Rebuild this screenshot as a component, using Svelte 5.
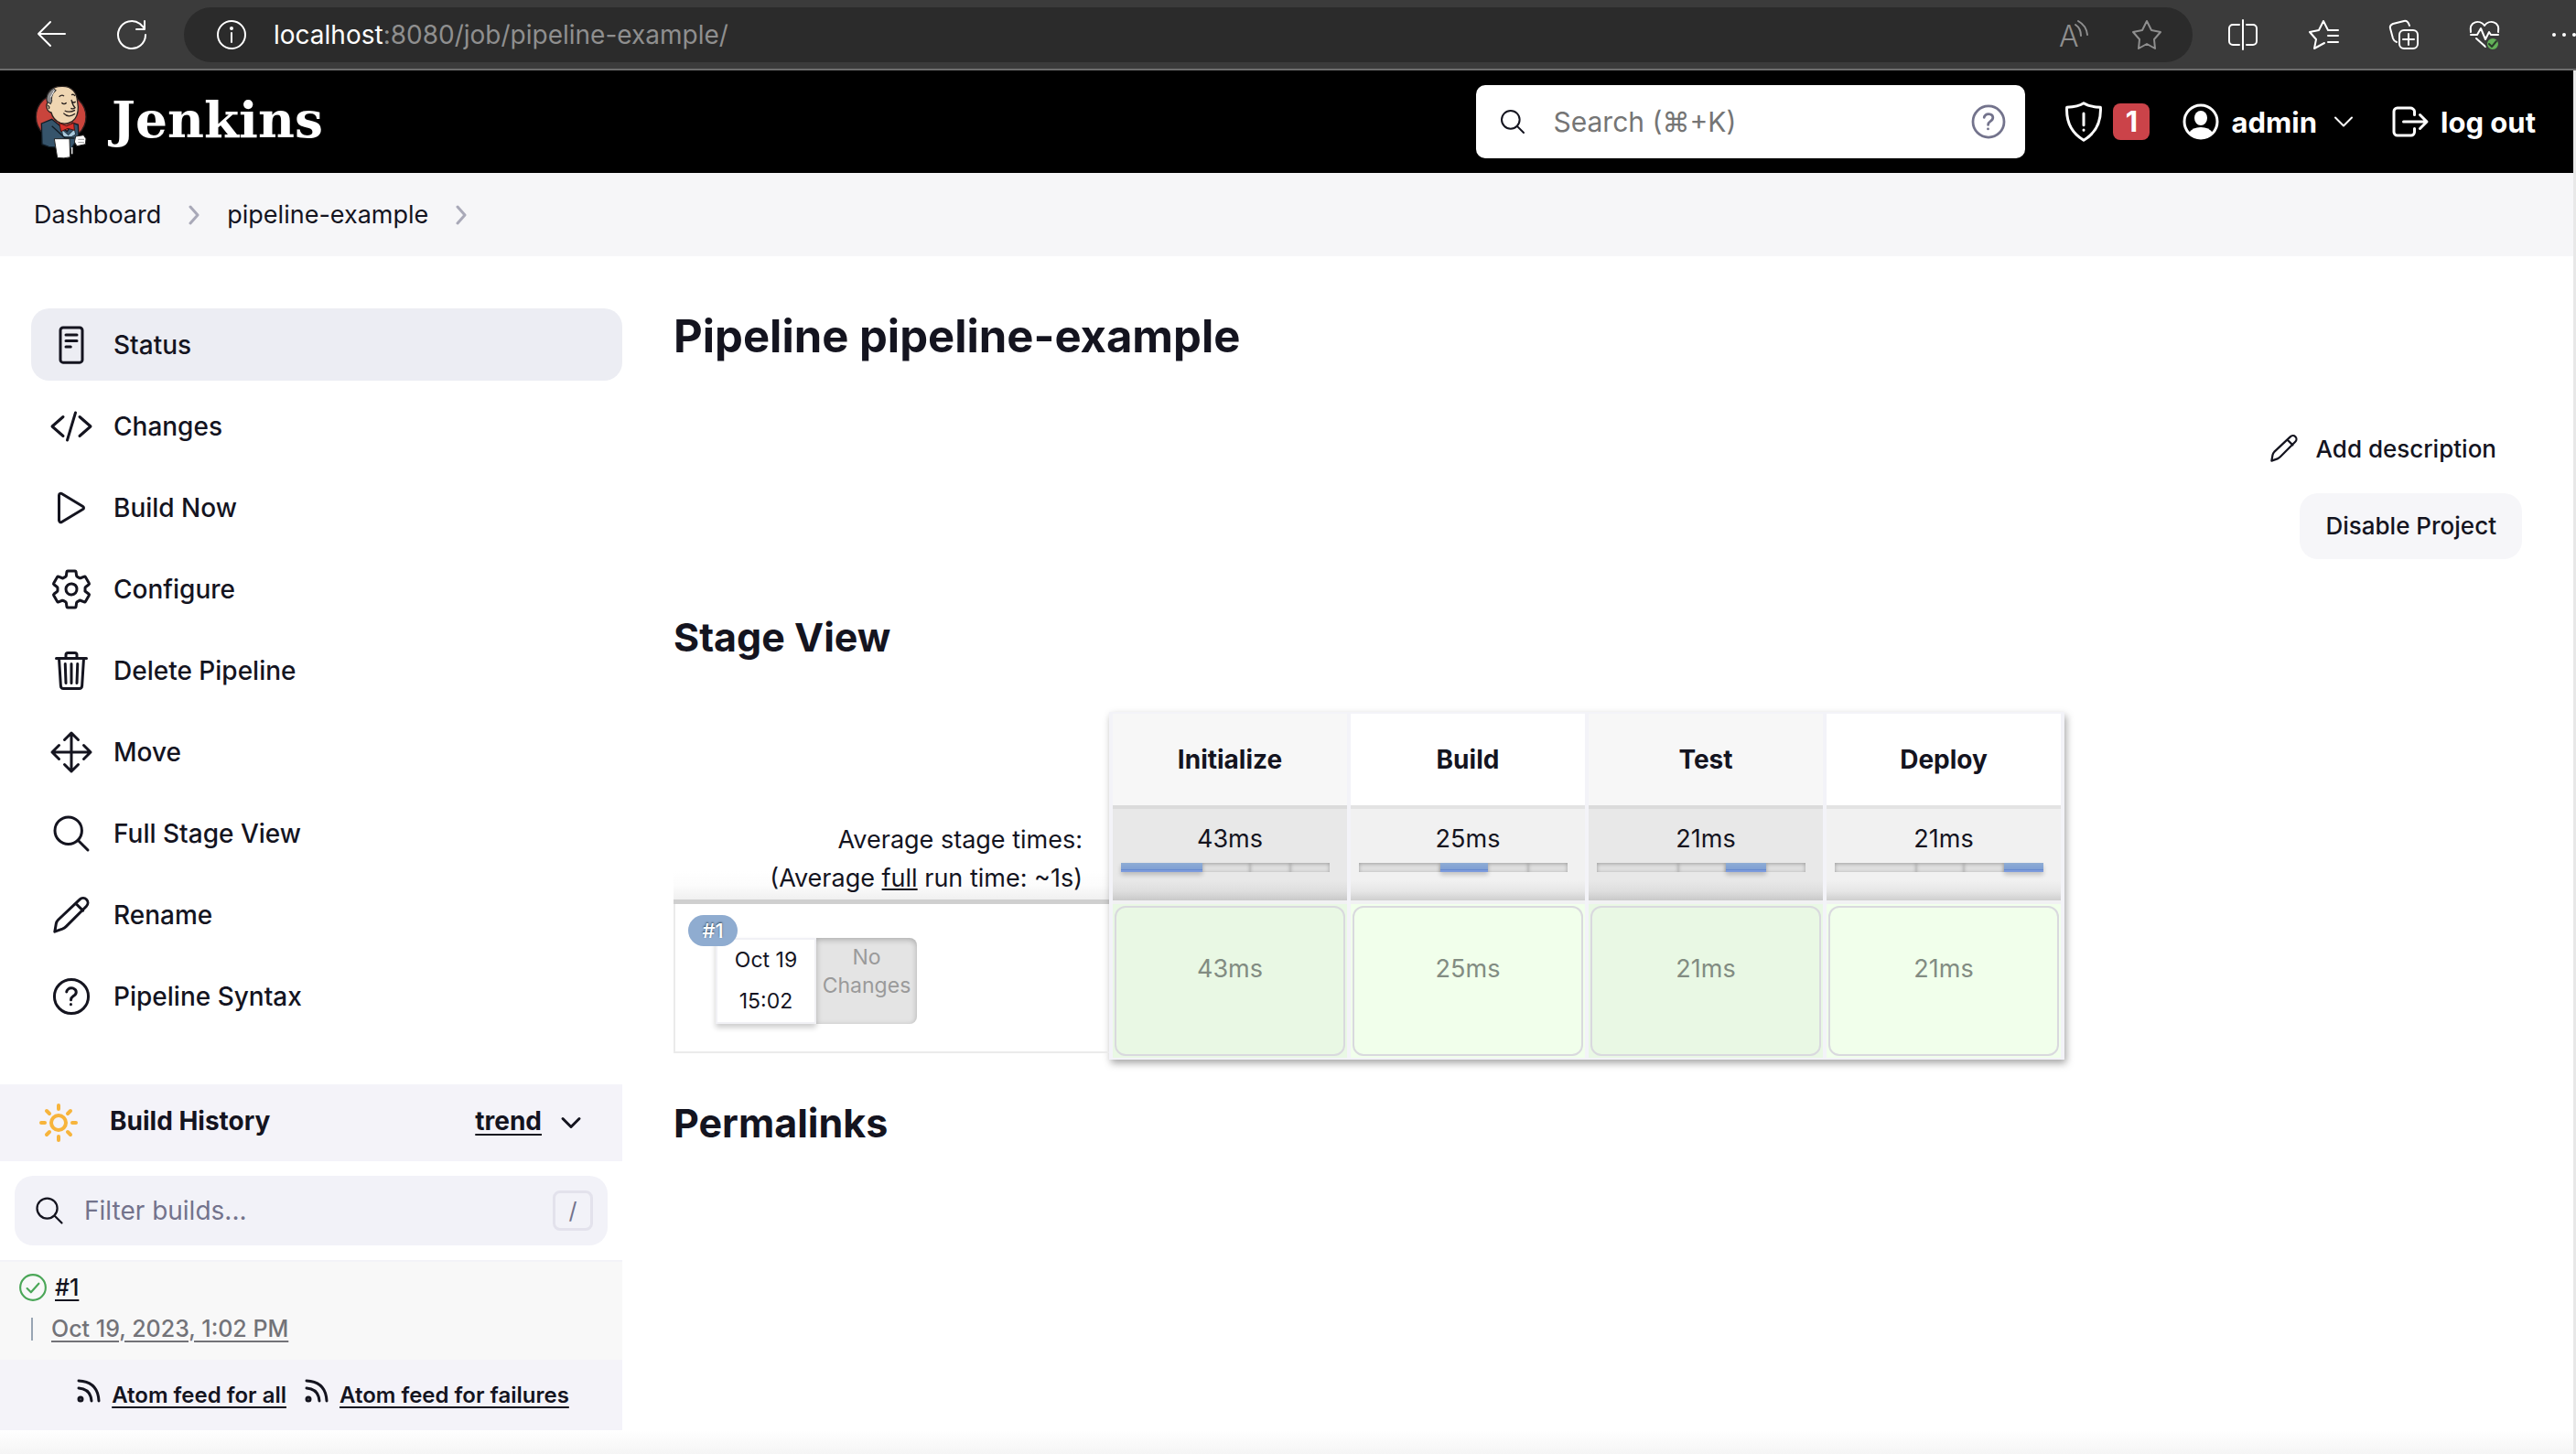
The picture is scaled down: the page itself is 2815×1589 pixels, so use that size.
<script>
  const stages = [
    { name: 'Initialize', time: '43ms', share: 39 },
    { name: 'Build', time: '25ms', share: 23 },
    { name: 'Test', time: '21ms', share: 19 },
    { name: 'Deploy', time: '21ms', share: 19 }
  ];

  const icons = {
    status: 'M160 52h192a32 32 0 0132 32v344a32 32 0 01-32 32H160a32 32 0 01-32-32V84a32 32 0 0132-32zM192 138h128M192 208h128M192 278h56',
    code: 'M160 368L32 256l128-112M352 368l128-112-128-112M304 96l-96 320',
    play: 'M112 111v290c0 17.440 17 28.520 31 20.160l247.900-148.370c12.120-7.250 12.120-26.330 0-33.580L143 90.840c-14-8.360-31 2.720-31 20.160z',
    gear: 'M262.290 192.310a64 64 0 1057.400 57.400 64.130 64.130 0 00-57.400-57.400zM416.390 256a154.340 154.340 0 01-1.530 20.790l45.210 35.460a10.810 10.810 0 012.450 13.750l-42.770 74a10.810 10.810 0 01-13.140 4.590l-44.900-18.080a16.110 16.110 0 00-15.170 1.750A164.480 164.480 0 01325 400.800a15.940 15.940 0 00-8.820 12.140l-6.730 47.890a11.080 11.080 0 01-10.680 9.170h-85.540a11.110 11.110 0 01-10.690-8.870l-6.720-47.820a16.070 16.070 0 00-9-12.220 155.300 155.300 0 01-21.460-12.570 16 16 0 00-15.110-1.710l-44.890 18.070a10.810 10.810 0 01-13.140-4.580l-42.770-74a10.800 10.800 0 012.450-13.750l38.210-30a16.050 16.050 0 006-14.080c-.360-4.170-.580-8.330-.580-12.500s.210-8.270.580-12.350a16 16 0 00-6.070-13.940l-38.190-30A10.810 10.810 0 0149.480 186l42.770-74a10.810 10.810 0 0113.140-4.590l44.900 18.080a16.110 16.110 0 0015.170-1.750A164.480 164.480 0 01187 111.200a15.940 15.940 0 008.820-12.140l6.730-47.890A11.080 11.080 0 01213.230 42h85.540a11.110 11.110 0 0110.690 8.870l6.720 47.820a16.070 16.070 0 009 12.220 155.300 155.300 0 0121.460 12.570 16 16 0 0015.110 1.710l44.890-18.070a10.810 10.810 0 0113.140 4.580l42.770 74a10.800 10.800 0 01-2.450 13.750l-38.210 30a16.050 16.050 0 00-6.050 14.080c.330 4.140.550 8.300.550 12.470z',
    trash: 'M112 112l20 320c.950 18.490 14.400 32 32 32h184c17.670 0 30.870-13.510 32-32l20-320M80 112h352M192 112V72a24 24 0 0124-24h80a24 24 0 0124 24v40M256 176v224M184 176l8 224M328 176l-8 224',
    move: 'M176 112l80-80 80 80M256 32v448M176 400l80 80 80-80M400 176l80 80-80 80M112 176l-80 80 80 80M32 256h448',
    search: 'M221 64a157 157 0 10157 157A157 157 0 00221 64zM338 338l110 110',
    pencil: 'M62 450l16-92c4-20 10-32 24-46L352 76c22-22 58-24 80-2s20 58-2 80L196 388c-14 14-26 22-44 30zM306 120l84 84',
    help: 'M256 58a198 198 0 10198 198A198 198 0 00256 58zM200 202s1-17 20-32c11-9 24-12 36-12 11 0 21 2 27 5 10 4 29 16 29 41 0 26-17 38-36 50s-25 27-25 42M250 347v2',
    logout: 'M304 336v40a40 40 0 01-40 40H104a40 40 0 01-40-40V136a40 40 0 0140-40h152c22 0 48 18 48 40v40M368 336l80-80-80-80M176 256h256',
    down: 'M112 184l144 144 144-144',
    shield: 'M256 40c50 34 110 44 196 48 10 180-60 304-196 384C120 392 50 268 60 88c86-4 146-14 196-48zM256 160v136M256 352v2'
  };

  const menu = [
    ['status', 'Status'],
    ['code', 'Changes'],
    ['play', 'Build Now'],
    ['gear', 'Configure'],
    ['trash', 'Delete Pipeline'],
    ['move', 'Move'],
    ['search', 'Full Stage View'],
    ['pencil', 'Rename'],
    ['help', 'Pipeline Syntax']
  ];

  const feeds = ['Atom feed for all', 'Atom feed for failures'];
</script>

{#snippet icon(name, cls)}
  <svg class="icon {cls}" viewBox="0 0 512 512" aria-hidden="true"><path d={icons[name]} /></svg>
{/snippet}

<div class="chrome">
  <button class="tool" aria-label="Back">
    <svg viewBox="0 0 32 32"><path d="M31 15H2M15 2L2 15l13 13" /></svg>
  </button>
  <button class="tool reload" aria-label="Reload">
    <svg viewBox="0 0 32 32"><path d="M31 16A15 15 0 1 1 25 4l5 5M30 1v9h-9" /></svg>
  </button>
  <div class="address">
    <svg class="tool-svg" viewBox="0 0 32 32"><circle cx="16" cy="16" r="15" /><path d="M16 14v10" /><circle class="dot" cx="16" cy="9" r="2" /></svg>
    <span class="url"><b>localhost</b>:8080/job/pipeline-example/</span>
    <button class="tool dim" aria-label="Read aloud">
      <svg viewBox="0 0 32 32"><text x="0" y="29">A</text><path d="M18 5q6 4 6 12M21 1q9 5 10 15" /></svg>
    </button>
    <button class="tool dim" aria-label="Add to favourites">
      <svg viewBox="0 0 32 32"><path d="M16 1l5 10 10 2-7 8 1 10-9-5-9 5 1-10-7-8 10-2z" /></svg>
    </button>
  </div>
  <div class="tools">
    <button class="tool" aria-label="Split screen">
      <svg viewBox="0 0 32 32"><path d="M16 0v32M12 5H5a4 4 0 0 0-4 4v14a4 4 0 0 0 4 4h7M20 5h7a4 4 0 0 1 4 4v14a4 4 0 0 1-4 4h-7" /></svg>
    </button>
    <button class="tool" aria-label="Favourites">
      <svg viewBox="0 0 32 32"><path d="M32 11H21L16 1l-5 10-10 2 7 8-2 10 11-6M21 17h11M21 24h11" /></svg>
    </button>
    <button class="tool" aria-label="Collections">
      <svg viewBox="0 0 32 32"><rect x="11" y="11" width="20" height="20" rx="5" /><path d="M21 15v12M15 21h12M8 24q-3-1-4-4L1 9q-1-3 3-5l12-3q4-1 6 5" /></svg>
    </button>
    <button class="tool" aria-label="Browser essentials">
      <svg viewBox="0 0 32 32"><path d="M1 13C-1 1 11-1 16 6 21-1 33 1 31 13M1 16h7l4-7 5 12 4-8 2 3h8M7 20l10 9" /><circle class="ok" cx="25" cy="26" r="7" /><path class="tick" d="M21 26l3 3 5-6" /></svg>
    </button>
    <button class="tool more" aria-label="More">
      <svg viewBox="0 0 28 32"><circle class="dot" cx="4" cy="16" r="2" /><circle class="dot" cx="15" cy="16" r="2" /><circle class="dot" cx="26" cy="16" r="2" /></svg>
    </button>
  </div>
</div>

<div class="page">
  <header>
    <a class="brand" href="#home">
      <svg class="butler" viewBox="24 36 174 243" aria-hidden="true">
        <ellipse cx="110" cy="140" rx="82" ry="78" fill="#c9443c" stroke="#2a1d1d" stroke-width="4" />
        <path d="M46 162l34-14 50 40 18-28 18 6 2 40-24 38-74-6-22-8z" fill="#36546b" stroke="#111c25" stroke-width="4" />
        <path d="M66 92C58 62 78 40 112 40c34-2 50 22 52 50 4 22 4 40-8 56-10 14-30 20-48 14-16-6-26-18-30-34-16-4-18-24-12-34z" fill="#efd6b2" stroke="#2b2320" stroke-width="4" />
        <path d="M64 90c-4-16 4-32 22-44l8 8c-12 8-16 20-14 34l-4 10z" fill="#8d8d8f" stroke="#222" stroke-width="3" />
        <path d="M88 54l-12 22" stroke="#eee" stroke-width="3" />
        <path d="M104 74q8-8 16-2M144 68q8-4 12 4M112 94q8 8 16 0M146 90q6 6 12 0M144 84q4 18 12 26-6 6-14 2M122 120q16 8 34-2M118 128q16 18 38 2M66 102q8 4 4 12" fill="none" stroke="#2b2320" stroke-width="4" />
        <path d="M112 180l22 20 20-20 4 18-14 8H116z" fill="#a9c9dc" stroke="#22303c" stroke-width="3" />
        <path d="M104 160l24 10 24-10 2 24-22-6-22 10z" fill="#d8322b" stroke="#4a1512" stroke-width="3" />
        <path d="M80 170l44 40h30" fill="none" stroke="#111c25" stroke-width="4" />
        <path d="M88 212h50l2 60q-20 6-42 2z" fill="#fff" stroke="#222" stroke-width="3" />
        <path d="M158 204l26-4 8 12-2 18-28 6-8-14z" fill="#fff" stroke="#222" stroke-width="3" />
        <path d="M166 214h20M166 224h20" stroke="#999" stroke-width="3" />
        <path d="M146 240v22" stroke="#ddd" stroke-width="5" />
      </svg>
      <span>Jenkins</span>
    </a>
    <label class="search">
      {@render icon('search', 'i32')}
      <input type="text" aria-label="Search" placeholder="Search (⌘+K)" />
      {@render icon('help', 'i44 muted')}
    </label>
    <a class="alerts" href="#security" aria-label="Security warnings">
      {@render icon('shield', 'i48')}
      <span class="count">1</span>
    </a>
    <a class="user" href="#admin">
      <svg class="i40" viewBox="0 0 40 40" aria-hidden="true">
        <circle cx="20" cy="20" r="18" fill="none" stroke="#fff" stroke-width="3" />
        <ellipse cx="20" cy="16" rx="7" ry="8" fill="#fff" />
        <path d="M7 32q4-6 13-6t13 6q-5 7-13 7T7 32z" fill="#fff" />
      </svg>
      <span>admin</span>
      {@render icon('down', 'i32')}
    </a>
    <a class="logout" href="#logout">
      {@render icon('logout', 'i48')}
      <span>log out</span>
    </a>
  </header>

  <nav class="crumbs" aria-label="Breadcrumb">
    <a href="#dashboard">Dashboard</a>
    <svg viewBox="0 0 12 22" aria-hidden="true"><path d="M2 2l8 9-8 9" /></svg>
    <a href="#job">pipeline-example</a>
    <svg viewBox="0 0 12 22" aria-hidden="true"><path d="M2 2l8 9-8 9" /></svg>
  </nav>

  <div class="body">
    <aside>
      <nav class="menu" aria-label="Job">
        {#each menu as [name, label], i}
          <a href="#{name}" class:active={i === 0}>
            {@render icon(name, 'i48')}
            <span>{label}</span>
          </a>
        {/each}
      </nav>

      <section class="history">
        <div class="history-head">
          <svg class="sun" viewBox="0 0 42 42" aria-hidden="true">
            <circle cx="21" cy="21" r="8" />
            <path d="M21 2v4M21 36v4M2 21h4M36 21h4M8 8l3 3M31 31l3 3M8 34l3-3M31 11l3-3" />
          </svg>
          <h2>Build History</h2>
          <a href="#trend">trend</a>
          {@render icon('down', 'i32 heavy')}
        </div>
        <label class="filter">
          {@render icon('search', 'i36')}
          <input type="text" aria-label="Filter builds" placeholder="Filter builds..." />
          <kbd>/</kbd>
        </label>
        <div class="build">
          <div class="build-name">
            <svg viewBox="0 0 30 30" aria-hidden="true"><circle cx="15" cy="15" r="13" /><path d="M9 16l4 4 8-9" /></svg>
            <a href="#build1">#1</a>
          </div>
          <div class="build-time"><a href="#build1">Oct 19, 2023, 1:02 PM</a></div>
        </div>
        <div class="feeds">
          {#each feeds as feed}
            <a href="#feed">
              <svg viewBox="0 0 26 26" aria-hidden="true"><circle cx="4" cy="22" r="2" /><path d="M2 10q13 1 14 14M2 2q21 1 22 22" /></svg>
              <span>{feed}</span>
            </a>
          {/each}
        </div>
      </section>
    </aside>

    <main>
      <h1>Pipeline pipeline-example</h1>
      <div class="actions">
        <a class="describe" href="#describe">{@render icon('pencil', 'i36')}<span>Add description</span></a>
        <button class="disable">Disable Project</button>
      </div>

      <h2>Stage View</h2>
      <div class="stage-view">
        <div class="runs">
          <div class="average">
            <div>Average stage times:</div>
            <div>(Average <u>full</u> run time: ~1s)</div>
          </div>
          <div class="run">
            <span class="run-badge">#1</span>
            <div class="run-date"><span>Oct 19</span><span>15:02</span></div>
            <div class="run-changes">No<br />Changes</div>
          </div>
        </div>
        <table>
          <thead>
            <tr>{#each stages as s}<th scope="col">{s.name}</th>{/each}</tr>
          </thead>
          <tbody>
            <tr class="totals">
              {#each stages as s, i}
                <td>
                  <div>{s.time}</div>
                  <div class="bar">
                    {#each stages as part, j}<span class:on={i === j} style:flex-grow={part.share}></span>{/each}
                  </div>
                </td>
              {/each}
            </tr>
            <tr class="results">
              {#each stages as s}<td><div>{s.time}</div></td>{/each}
            </tr>
          </tbody>
        </table>
      </div>

      <h2>Permalinks</h2>
    </main>
  </div>
  <div class="fade"></div>
</div>

<style>
  :global(body) {
    margin: 0;
    background: #fff;
    overflow: hidden;
  }
  :global(#app) {
    font-family: Inter, 'Liberation Sans', sans-serif;
    font-size: 28px;
    color: #14141f;
  }
  a {
    color: inherit;
    text-decoration: none;
  }
  button {
    font: inherit;
    color: inherit;
    border: 0;
    padding: 0;
    background: none;
  }
  input {
    font: inherit;
    color: inherit;
    border: 0;
    padding: 0;
    background: none;
    flex: 1;
    min-width: 0;
    outline: 0;
  }
  svg {
    flex: none;
    display: block;
  }
  .icon {
    fill: none;
    stroke: currentColor;
    stroke-width: 32;
    stroke-linecap: round;
    stroke-linejoin: round;
  }
  .heavy { stroke-width: 48; }
  .muted { color: #73738c; }
  .i32 { width: 32px; height: 32px; }
  .i36 { width: 36px; height: 36px; }
  .i40 { width: 40px; height: 40px; }
  .i44 { width: 44px; height: 44px; }
  .i48 { width: 48px; height: 48px; }

  /* browser toolbar */
  .chrome {
    display: flex;
    align-items: center;
    height: 75px;
    padding-left: 40px;
    background: #3b3b3b;
    border-bottom: 2px solid #6c6c6c;
    overflow: hidden;
  }
  .tool svg,
  .tool-svg {
    width: 32px;
    height: 32px;
    fill: none;
    stroke: #fff;
    stroke-width: 2;
    stroke-linecap: round;
    stroke-linejoin: round;
    overflow: visible;
  }
  .dim svg { stroke: #8f8f8f; }
  .dim text {
    font-size: 32px;
    font-weight: 300;
    fill: #8f8f8f;
    stroke: none;
  }
  .tool .dot,
  .tool-svg .dot { fill: #fff; stroke: none; }
  .tool .ok { fill: #62b058; stroke: #3b3b3b; }
  .tool .tick { stroke: #2b3b2b; }
  .reload { margin: 0 41px 0 56px; }
  .address {
    flex: 1;
    display: flex;
    align-items: center;
    gap: 48px;
    height: 60px;
    padding: 0 34px 0 36px;
    margin-right: 39px;
    border-radius: 30px;
    background: #2b2b2b;
  }
  .url {
    flex: 1;
    margin-left: -18px;
    color: #8f8f8f;
  }
  .url b { font-weight: 400; color: #fff; }
  .tools { display: flex; gap: 56px; }
  .tool.more svg { width: 28px; }

  .page { border-right: 3px solid #e8e8e8; }

  header {
    display: flex;
    align-items: center;
    height: 112px;
    padding: 0 41px 0 38px;
    background: #000;
    color: #fff;
    font-size: 31px;
    font-weight: 700;
  }
  .brand {
    display: flex;
    align-items: center;
    gap: 26px;
    margin-right: auto;
    font-family: 'DejaVu Serif', serif;
    font-size: 55px;
    font-weight: 700;
    line-height: 70px;
  }
  .brand span { padding-bottom: 4px; }
  .butler { width: 58px; height: 81px; }
  .search {
    display: flex;
    align-items: center;
    width: 600px;
    height: 80px;
    box-sizing: border-box;
    padding: 0 18px 0 24px;
    border-radius: 10px;
    background: #fff;
    color: #14141f;
    font-size: 30px;
    font-weight: 400;
  }
  .search input { margin-left: 28px; }
  .search input::placeholder { color: #757575; opacity: 1; }
  .alerts,
  .user,
  .logout { display: flex; align-items: center; }
  .alerts { margin-left: 40px; gap: 8px; }
  .count {
    width: 40px;
    line-height: 40px;
    text-align: center;
    border-radius: 8px;
    background: #cb4349;
  }
  .user { margin-left: 36px; gap: 13px; }
  .logout { margin-left: 33px; gap: 9px; }

  .crumbs {
    display: flex;
    align-items: center;
    gap: 30px;
    height: 91px;
    padding-left: 37px;
    background: #f6f6f8;
    font-size: 27px;
  }
  .crumbs svg {
    width: 12px;
    height: 22px;
    fill: none;
    stroke: #a9a9b8;
    stroke-width: 3;
    stroke-linecap: round;
    stroke-linejoin: round;
  }

  .body { display: flex; }
  aside {
    width: 680px;
    flex: none;
    padding-top: 57px;
  }
  .menu {
    display: flex;
    flex-direction: column;
    gap: 10px;
    padding-left: 34px;
    margin-bottom: 57px;
    font-weight: 500;
  }
  .menu a {
    display: flex;
    align-items: center;
    gap: 22px;
    height: 79px;
    padding-left: 20px;
    border-radius: 20px;
  }
  .menu .active { background: #ecedf3; }

  .history-head {
    display: flex;
    align-items: center;
    height: 84px;
    padding: 0 40px 0 43px;
    background: #f4f3f9;
    font-weight: 700;
  }
  .history-head h2 {
    flex: 1;
    margin: 0 0 4px 35px;
    font-size: 28px;
    font-weight: 700;
  }
  .history-head a {
    margin: 0 16px 4px 0;
    text-decoration: underline;
    text-underline-offset: 4px;
    text-decoration-thickness: 2px;
  }
  .sun {
    width: 42px;
    height: 42px;
    fill: none;
    stroke: #f7b43c;
    stroke-width: 4;
    stroke-linecap: round;
  }
  .filter {
    display: flex;
    align-items: center;
    height: 76px;
    margin: 16px;
    padding: 0 16px 0 20px;
    border-radius: 20px;
    background: #f2f2f8;
  }
  .filter input { margin-left: 20px; }
  .filter input::placeholder { color: #73738c; opacity: 1; }
  kbd {
    width: 38px;
    line-height: 38px;
    text-align: center;
    border: 3px solid #e3e2ec;
    border-radius: 8px;
    font-family: inherit;
    font-size: 25px;
    color: #73738c;
  }
  .build {
    border-top: 2px solid #f3f3f8;
    padding: 12px 20px 17px;
    background: #f8f8f8;
    font-size: 25px;
    font-weight: 500;
  }
  .build a,
  .feeds span {
    text-decoration: underline;
    text-underline-offset: 4px;
    text-decoration-thickness: 2px;
  }
  .build-name {
    display: flex;
    align-items: center;
    gap: 8px;
    height: 32px;
  }
  .build-name svg {
    width: 32px;
    height: 32px;
    fill: none;
    stroke: #4aa657;
    stroke-width: 2;
    stroke-linecap: round;
    stroke-linejoin: round;
  }
  .build-time {
    margin: 17px 0 4px 14px;
    padding-left: 20px;
    border-left: 2px solid #98a5b3;
    line-height: 25px;
    color: #737378;
  }
  .feeds {
    display: flex;
    justify-content: center;
    gap: 20px;
    padding: 0 0 0 26px;
    line-height: 77px;
    background: #f4f3f9;
    font-size: 24px;
    font-weight: 600;
  }
  .feeds a { display: flex; align-items: center; gap: 12px; }
  .feeds svg {
    width: 26px;
    height: 26px;
    margin-bottom: 10px;
    fill: none;
    stroke: #14141f;
    stroke-width: 3;
    stroke-linecap: round;
  }

  main {
    flex: 1;
    padding: 58px 56px 0 56px;
  }
  h1 {
    margin: 0;
    font-size: 49px;
    line-height: 60px;
    font-weight: 700;
  }
  main h2 {
    margin: 0;
    font-size: 43px;
    line-height: 56px;
    font-weight: 700;
  }
  .actions {
    display: flex;
    flex-direction: column;
    align-items: flex-end;
    gap: 31px;
    margin: 74px 0 57px;
    font-size: 26px;
    font-weight: 500;
  }
  .describe {
    display: flex;
    align-items: center;
    gap: 17px;
    padding-right: 28px;
  }
  .disable {
    padding: 0 28px;
    line-height: 72px;
    border-radius: 20px;
    background: #f6f6f9;
  }
  .stage-view {
    display: flex;
    align-items: flex-end;
    margin: 54px 0 41px;
  }
  .runs { width: 476px; padding-bottom: 7px; }
  .average {
    padding: 18px 29px 2px 0;
    border-bottom: 5px solid #cfcfcf;
    background: linear-gradient(#fff 70%, #fcfcfc 85%, #f0f0f0);
    font-size: 27px;
    text-align: right;
    line-height: 42px;
  }
  .run {
    position: relative;
    display: flex;
    height: 94px;
    padding: 37px 0 30px 44px;
    border: 2px solid #ebebeb;
    border-top: 0;
    border-right: 0;
    font-size: 23px;
  }
  .run-badge {
    position: absolute;
    left: 14px;
    top: 12px;
    width: 54px;
    line-height: 34px;
    text-align: center;
    border-radius: 17px;
    background: #8facd0;
    color: #fff;
    font-size: 22px;
    font-weight: 500;
    text-shadow: 0 -1px 2px #345;
  }
  .run-date {
    display: flex;
    flex-direction: column;
    width: 106px;
    border: 2px solid #f1f1f5;
    line-height: 45px;
    text-align: center;
    box-shadow: 0 4px 6px rgba(0, 0, 0, 0.2);
  }
  .run-changes {
    width: 110px;
    padding-top: 6px;
    border-radius: 0 8px 8px 0;
    background: #e4e4e4;
    box-shadow: inset 0 2px 6px rgba(0, 0, 0, 0.25);
    color: #9a9a9a;
    line-height: 31px;
    text-align: center;
  }

  table {
    border-collapse: separate;
    border-spacing: 4px 0;
    border: solid #f3f3f8;
    border-width: 2px 0;
    background: #f3f3f8;
    box-shadow: 2px 4px 8px rgba(0, 0, 0, 0.35);
    font-size: 27px;
    text-align: center;
  }
  th,
  td { width: 256px; padding: 0; }
  th {
    height: 100px;
    border-bottom: 4px solid #e3e3e3;
    background: #fff;
    font-size: 28px;
    font-weight: 700;
  }
  th:nth-child(odd) { background: #f7f7f7; border-color: #dbdbdb; }
  .totals td {
    height: 100px;
    border-bottom: 4px solid #f1f1f3;
    background: linear-gradient(#f1f1f1 78%, #e6e6e6 90%, #cfcfcf);
    background-clip: padding-box;
    line-height: 42px;
  }
  .totals td:nth-child(odd) {
    background: linear-gradient(#e8e8e8 78%, #dedede 90%, #c9c9c9);
    background-clip: padding-box;
  }
  .bar {
    display: flex;
    margin: 5px 19px 19px 9px;
    height: 10px;
  }
  .bar span {
    flex-basis: 0;
    background: #e0e0e0;
    box-shadow: inset 0 1px 4px rgba(0, 0, 0, 0.3);
  }
  .bar .on {
    background: linear-gradient(#8fadd4, #7f9fd4 70%, #4f75c8 80%, #7d9bdc 85%);
    box-shadow: 0 3px 5px rgba(0, 0, 0, 0.2);
  }
  .results td {
    height: 168px;
    background: #f1ffeb;
    color: #828c82;
  }
  .results td:nth-child(odd) { background: #e9f8e4; }
  .results div {
    height: 114px;
    margin: 0 2px;
    padding-top: 46px;
    border: 2px solid #d9d9de;
    border-radius: 12px;
    line-height: 42px;
  }

  .fade {
    height: 26px;
    background: linear-gradient(#fff, #f5f5f5);
  }
</style>
